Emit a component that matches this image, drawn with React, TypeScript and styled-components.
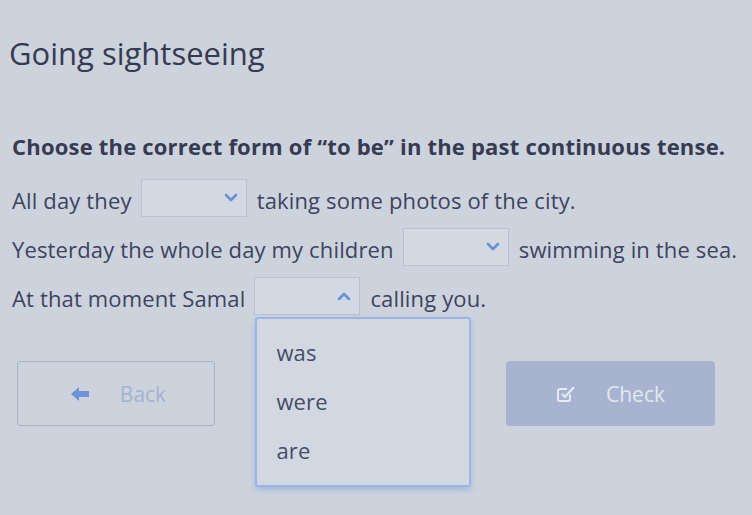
import React from "react";
import styled, { createGlobalStyle } from "styled-components";

const Global = createGlobalStyle`
  html, body { margin: 0; padding: 0; }
  body {
    background: #cdd3dd;
    font-family: "Open Sans", "Noto Sans", sans-serif;
    color: #3b4159;
    width: 752px;
    height: 515px;
    overflow: hidden;
  }
`;

const Page = styled.div`
  padding: 32px 0 0 9px;
  display: flex;
  flex-direction: column;
`;

const Title = styled.h1`
  margin: 0;
  font-size: 31px;
  font-weight: 400;
  line-height: 42px;
  color: #353a52;
`;

const Instruction = styled.p`
  margin: 58px 0 0 3px;
  font-size: 22px;
  font-weight: 700;
  line-height: 28px;
  color: #363b52;
  letter-spacing: 0.2px;
  white-space: nowrap;
`;

const Sentence = styled.div`
  display: flex;
  align-items: center;
  gap: 8px;
  margin: 0 0 0 3px;
  height: 49px;
  font-size: 22px;
  letter-spacing: 0.15px;
  color: #3d4360;
  white-space: nowrap;
  &:first-of-type { margin-top: 15px; }
`;

const SelectWrap = styled.div`
  position: relative;
  margin: 0 2px 4px 1px;
`;

const SelectBox = styled.div<{ $w: number }>`
  width: ${(p) => p.$w}px;
  height: 38px;
  box-sizing: border-box;
  border: 1px solid #b8c2d3;
  background: #d3d9e2;
  display: flex;
  align-items: center;
  justify-content: flex-end;
  padding-right: 8px;
  color: #6b8fd2;
`;

const Menu = styled.div`
  position: absolute;
  left: 1px;
  top: 40px;
  width: 216px;
  height: 170px;
  box-sizing: border-box;
  border: 2px solid #9bb6e6;
  border-radius: 3px;
  background: #d2d8e2;
  box-shadow: 0 3px 6px rgba(110, 150, 220, 0.45);
  padding: 19px 0 0 19px;
  display: flex;
  flex-direction: column;
  z-index: 5;
`;

const MenuItem = styled.div`
  height: 49px;
  font-size: 22px;
  color: #474c68;
  line-height: 28px;
`;

const Buttons = styled.div`
  display: flex;
  justify-content: space-between;
  margin: 39px 37px 0 8px;
`;

const BackButton = styled.div`
  width: 198px;
  height: 65px;
  box-sizing: border-box;
  border: 1px solid #aab3c3;
  border-radius: 3px;
  display: flex;
  align-items: center;
  justify-content: center;
  gap: 30px;
  padding-left: 4px;
  color: #a3b2d2;
  font-size: 21px;
`;

const CheckButton = styled.div`
  width: 209px;
  height: 65px;
  box-sizing: border-box;
  border-radius: 4px;
  background: #a8b4cf;
  display: flex;
  align-items: center;
  justify-content: center;
  gap: 30px;
  color: #e2e7f1;
  font-size: 21px;
`;

const Chevron = ({ up }: { up?: boolean }) => (
  <svg width="14" height="10" viewBox="0 0 14 10">
    <path
      d={up ? "M2 8 L7 3 L12 8" : "M2 2 L7 7 L12 2"}
      fill="none"
      stroke="currentColor"
      strokeWidth="2.6"
      strokeLinecap="round"
      strokeLinejoin="round"
    />
  </svg>
);

const Select = ({ w, open }: { w: number; open?: boolean }) => (
  <SelectWrap>
    <SelectBox $w={w}>
      <Chevron up={open} />
    </SelectBox>
    {open && (
      <Menu>
        <MenuItem>was</MenuItem>
        <MenuItem>were</MenuItem>
        <MenuItem>are</MenuItem>
      </Menu>
    )}
  </SelectWrap>
);

export default function App() {
  return (
    <>
      <Global />
      <Page>
        <Title>Going sightseeing</Title>
        <Instruction>Choose the correct form of “to be” in the past continuous tense.</Instruction>
        <Sentence>
          All day they <Select w={106} /> taking some photos of the city.
        </Sentence>
        <Sentence>
          Yesterday the whole day my children <Select w={106} /> swimming in the sea.
        </Sentence>
        <Sentence>
          At that moment Samal <Select w={106} open /> calling you.
        </Sentence>
        <Buttons>
          <BackButton>
            <svg width="20" height="16" viewBox="0 0 20 16">
              <path d="M1 8 L9 1 V5 H19 V11 H9 V15 Z" fill="#6f92d6" strokeLinejoin="round" />
            </svg>
            <span>Back</span>
          </BackButton>
          <CheckButton>
            <svg width="20" height="20" viewBox="0 0 20 20">
              <path d="M14 10.5 V15 a2 2 0 0 1 -2 2 H4 a2 2 0 0 1 -2 -2 V7 a2 2 0 0 1 2 -2 H11" fill="none" stroke="#e6ebf4" strokeWidth="2" />
              <path d="M6 10 L9 13 L18 3" fill="none" stroke="#e6ebf4" strokeWidth="2.2" />
            </svg>
            <span>Check</span>
          </CheckButton>
        </Buttons>
      </Page>
    </>
  );
}
